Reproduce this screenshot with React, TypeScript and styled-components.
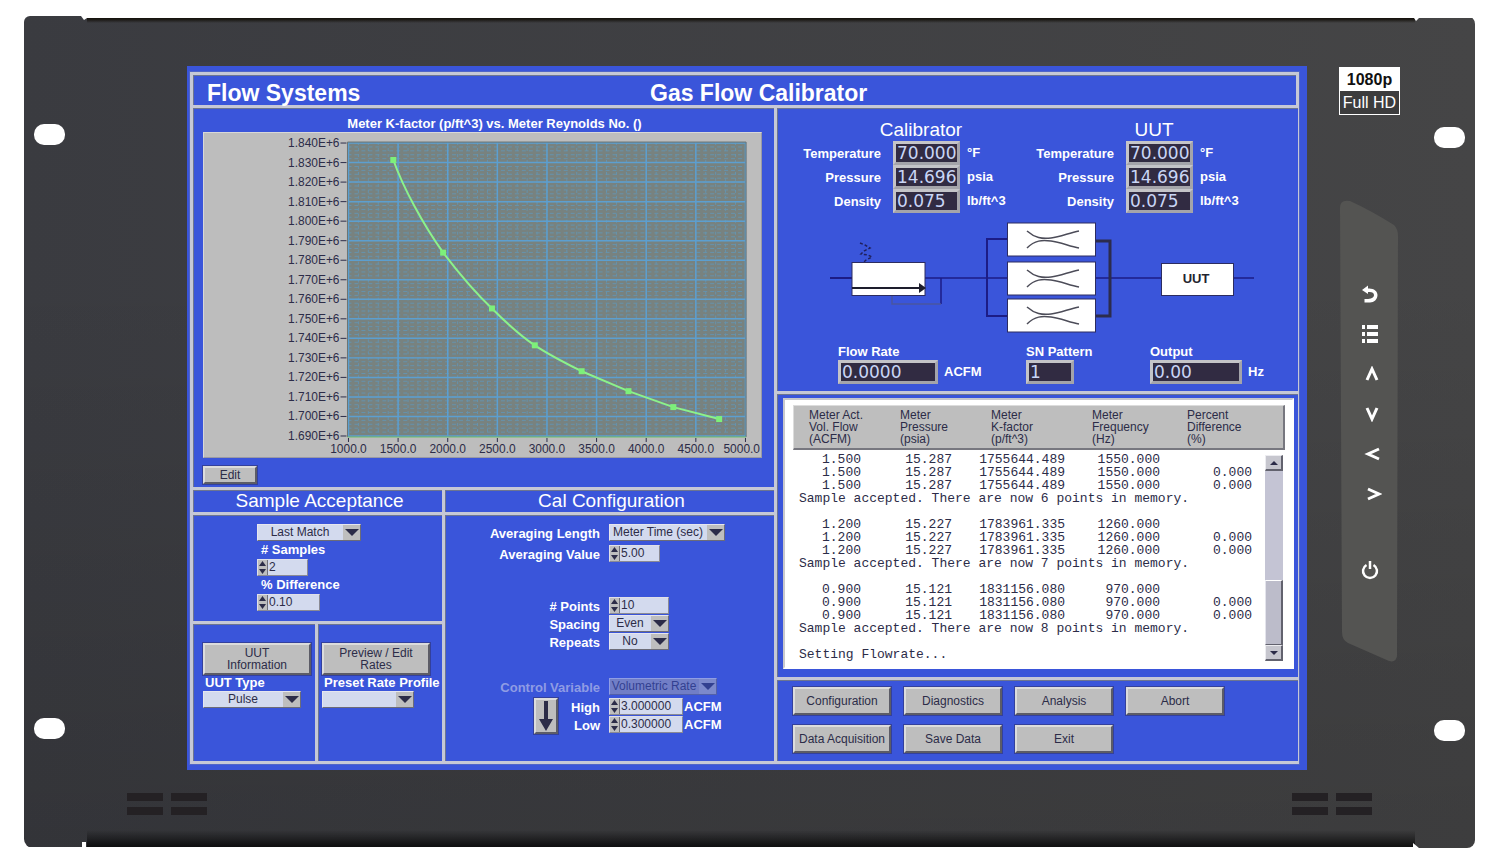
import React from 'react';
import styled, { createGlobalStyle, css } from 'styled-components';

const color = {
  blue: '#3a55da',
  line: '#c6c8d6',
  lineEdge: '#6d7590',
  face: '#bebebe',
  faceLight: '#dcdcdc',
  faceDark: '#5c5c66',
  field: '#d3daee',
  ink: '#2c2c48',
  dark: '#312b42',
};

const sans = '"Liberation Sans", Arial, sans-serif';

const GlobalStyle = createGlobalStyle`
  * { box-sizing: border-box; }
  body { margin: 0; background: #fff; font-family: ${sans}; }
  button, input, select { font: inherit; margin: 0; padding: 0; border-radius: 0; }
`;

/* ---------- Rack enclosure ---------- */

const Page = styled.main`
  padding: 16px 25px 16px 24px;
`;

const Bezel = styled.div`
  border-radius: 6px 8px 8px 9px;
  background:
    linear-gradient(to top, rgba(0, 0, 0, 0.7) 2px, rgba(0, 0, 0, 0) 18px) 63px 100% / calc(100% - 123px) 100% no-repeat,
    linear-gradient(to bottom, #17140f 3px, rgba(0, 0, 0, 0) 7px) 63px 0 / calc(100% - 123px) 100% no-repeat,
    linear-gradient(to bottom, rgba(0, 0, 0, 0) 30%, rgba(0, 0, 0, 0.12)),
    linear-gradient(to right, #3a3b40, #454546);
  clip-path: polygon(
    0 0, 57px 0, 60px 4px, 63px 2px, calc(100% - 61px) 2px, calc(100% - 59px) 5px, calc(100% - 56px) 2px, 100% 2px,
    100% 100%, calc(100% - 56px) 100%, calc(100% - 62px) calc(100% - 5px), calc(100% - 62px) calc(100% - 1px),
    62px calc(100% - 1px), 62px calc(100% - 6px), 58px calc(100% - 6px), 58px calc(100% - 1px), 0 calc(100% - 1px)
  );
`;

const Front = styled.div`
  display: grid;
  grid-template-columns: 163px minmax(0, 1fr) 168px;
`;

const Ear = styled.div`
  display: flex;
  flex-direction: column;
  justify-content: space-between;
  padding: 108px 0 31px 10px;
`;

const RightSide = styled.div`
  display: flex;
  justify-content: space-between;
  padding: 0 10px 0 32px;
`;

const RightEar = styled(Ear)`
  padding: 111px 0 29px;
`;

const MountHole = styled.span`
  width: 31px;
  height: 21px;
  border-radius: 10px;
  background: #fff;
`;

const Footer = styled.div`
  display: flex;
  justify-content: space-between;
  padding: 23px 103px 33px;
`;

const Vent = styled.div`
  display: grid;
  grid-template-columns: 36px 36px;
  grid-auto-rows: 8px;
  gap: 6px 8px;
`;

const Slot = styled.span`
  background: #242124;
`;

const Controls = styled.div`
  display: flex;
  flex-direction: column;
  width: 61px;
  padding-top: 51px;
`;

const Badge = styled.div`
  border: 1px solid #fff;
  background: #3c3c3d;
  color: #fff;
  font-size: 16px;
  line-height: 23px;
  text-align: center;
  white-space: nowrap;
`;

const BadgeTop = styled.div`
  background: #fff;
  color: #111;
  font-weight: bold;
`;

const KeyPad = styled.div`
  position: relative;
  display: flex;
  flex-direction: column;
  gap: 18px;
  width: 59px;
  height: 462px;
  margin: 85px 0 0 1px;
  padding-top: 83px;
`;

const KeyPadShape = styled.svg`
  position: absolute;
  inset: 0;
  width: 100%;
  height: 100%;
`;

const Key = styled.button<{ $apart?: boolean }>`
  position: relative;
  display: flex;
  align-items: center;
  justify-content: center;
  height: 22px;
  border: 0;
  background: none;
  color: #fff;
  ${(p) => p.$apart && css`margin-top: 36px;`}
`;

/* ---------- Screen and its ruled panels ---------- */

const Screen = styled.div`
  margin-top: 50px;
  padding: 6px 8px 6px 3px;
  background: ${color.blue};
`;

const Ruled = styled.div`
  display: grid;
  gap: 3px;
  background: ${color.line};
`;

const Frame = styled(Ruled)`
  padding: 3px;
  box-shadow: 0 0 0 1px #5065c8;
`;

const Body = styled(Ruled)`
  grid-template-columns: minmax(0, 581fr) minmax(0, 519fr);
`;

const LeftSide = styled(Ruled)`
  grid-template-rows: 379px 1fr;
`;

const Setup = styled(Ruled)`
  grid-template-columns: minmax(0, 249fr) minmax(0, 329fr);
  grid-template-rows: 22px 1fr;
`;

const Acceptance = styled(Ruled)`
  grid-template-rows: 106px 137px;
`;

const Split = styled(Ruled)`
  grid-template-columns: minmax(0, 122fr) minmax(0, 124fr);
`;

const RightPanels = styled(Ruled)`
  grid-template-rows: 283px 283px 81px;
`;

const Panel = styled.section`
  background: ${color.blue};
  box-shadow: inset 1px 1px 0 ${color.lineEdge};
`;

const TitleBar = styled.header`
  display: grid;
  grid-template-columns: 443px 1fr;
  align-items: center;
  height: 30px;
  padding: 5px 0 0 14px;
  background: ${color.blue};
  box-shadow: inset 1px 1px 0 ${color.lineEdge};
  color: #fff;
`;

const Title = styled.h1`
  margin: 0;
  font: bold 23px/24px ${sans};
  white-space: nowrap;
`;

const PanelHeading = styled.h2`
  margin: 0;
  padding-left: 4px;
  background: ${color.blue};
  box-shadow: inset 1px 1px 0 ${color.lineEdge};
  color: #fff;
  font: 19px/22px ${sans};
  text-align: center;
`;

const strong = css`
  color: #fff;
  font: bold 13px/18px ${sans};
  white-space: nowrap;
`;

const Label = styled.label`
  ${strong}
`;

const Unit = styled.span`
  ${strong}
`;

/* ---------- Controls ---------- */

const PushButton = styled.button<{ $w: number; $h: number }>`
  width: ${(p) => p.$w}px;
  height: ${(p) => p.$h}px;
  border: 2px solid;
  border-color: ${color.faceLight} ${color.faceDark} ${color.faceDark} ${color.faceLight};
  outline: 1px solid #33409c;
  outline-offset: 0;
  background: ${color.face};
  color: ${color.ink};
  font-size: 12px;
  line-height: 12px;
`;

const SelectBox = styled.span<{ $w: number; $off?: boolean }>`
  position: relative;
  display: block;
  width: ${(p) => p.$w}px;
  height: 17px;
  opacity: ${(p) => (p.$off ? 0.5 : 1)};

  select {
    appearance: none;
    display: block;
    width: 100%;
    height: 17px;
    padding-right: 18px;
    border: 1px solid;
    border-color: #e6e6ee #6c6c78 #6c6c78 #e6e6ee;
    background: ${(p) => (p.$off ? '#a8a8b4' : color.field)};
    color: ${color.ink};
    opacity: 1;
    font-size: 12px;
    line-height: 15px;
    text-align: center;
    text-align-last: center;
  }

  svg {
    position: absolute;
    top: 1px;
    right: 1px;
    background: ${color.face};
    pointer-events: none;
  }
`;

const SpinBox = styled.span<{ $w: number }>`
  display: grid;
  grid-template-columns: 9px 1fr;
  width: ${(p) => p.$w}px;
  height: 17px;
  border: 1px solid;
  border-color: #e0e0e8 #8a8a94 #8a8a94 #e0e0e8;
  background: ${color.field};

  input {
    width: 100%;
    min-width: 0;
    border: 0;
    border-left: 1px solid #70707c;
    padding-left: 1px;
    background: transparent;
    color: ${color.ink};
    font-size: 12px;
    line-height: 15px;
  }
`;

const SpinKeys = styled.span`
  display: grid;
  grid-template-rows: 1fr 1fr;
  background: ${color.face};

  button {
    display: flex;
    align-items: center;
    justify-content: center;
    border: 0;
    background: none;
  }
`;

type SelectProps = { id: string; width: number; options: string[]; off?: boolean; name?: string };

function Select({ id, width, options, off, name }: SelectProps) {
  return (
    <SelectBox $w={width} $off={off}>
      <select id={id} disabled={off} aria-label={name}>
        {options.map((o) => (
          <option key={o}>{o}</option>
        ))}
      </select>
      <svg width="17" height="15" viewBox="0 0 17 15" aria-hidden="true">
        <path d="M2 4h14l-7 7z" fill={color.ink} />
      </svg>
    </SelectBox>
  );
}

function Spin({ id, width, value }: { id: string; width: number; value: string }) {
  return (
    <SpinBox $w={width}>
      <SpinKeys>
        <button type="button" aria-label="Increase">
          <svg width="7" height="5" viewBox="0 0 7 5"><path d="M0 5l3.500-5L7 5z" fill={color.ink} /></svg>
        </button>
        <button type="button" aria-label="Decrease">
          <svg width="7" height="5" viewBox="0 0 7 5"><path d="M0 0l3.500 5L7 0z" fill={color.ink} /></svg>
        </button>
      </SpinKeys>
      <input id={id} defaultValue={value} />
    </SpinBox>
  );
}

/* ---------- Chart ---------- */

const ChartPanel = styled(Panel)`
  padding: 7px 12px 0 10px;
`;

const ChartTitle = styled.h2`
  margin: 0;
  padding-left: 24px;
  color: #fff;
  font: bold 13px/17px ${sans};
  text-align: center;
`;

const ChartSvg = styled.svg`
  display: block;
  width: 100%;
  height: 326px;
  margin-bottom: 7px;
  background: #bdbdbd;
  border: 1px solid;
  border-color: #d8d8d8 #9a9aa4 #9a9aa4 #d8d8d8;
`;

const POINTS = [
  [190, 27], [240, 120], [289, 176], [332, 213], [379, 239], [426, 259], [471, 275], [517, 287],
];

const PLOT = { x: 144, y: 9, w: 400, h: 296 };
const Y_STEP = 19.6;
const X_STEP = 49.8;

function KFactorChart() {
  const yTicks = Array.from({ length: 16 }, (_, i) => `1.${840 - i * 10}E+6`);
  const xTicks = Array.from({ length: 9 }, (_, i) => `${1000 + i * 500}.0`);
  const minorY = Array.from({ length: 75 }, (_, i) => PLOT.y + 1 + (i * Y_STEP) / 5);
  const minorX = Array.from({ length: 40 }, (_, i) => PLOT.x + 1 + (i * X_STEP) / 5);
  return (
    <ChartSvg viewBox="0 0 559 325" role="img" aria-label="Meter K-factor against Reynolds number">
      <rect x={PLOT.x} y={PLOT.y} width={PLOT.w} height={PLOT.h} fill="#78827f" />
      <g stroke="#6099bd" strokeWidth="1" opacity="0.75">
        {minorY.map((y) => (
          <line key={y} x1={PLOT.x} x2={PLOT.x + PLOT.w} y1={y} y2={y} strokeDasharray="4 3" />
        ))}
        {minorX.map((x) => (
          <line key={x} x1={x} x2={x} y1={PLOT.y} y2={PLOT.y + PLOT.h} strokeDasharray="3 3" />
        ))}
      </g>
      <g stroke="#5c9fd0" strokeWidth="1.500">
        {yTicks.map((t, i) => (
          <line key={t} x1={PLOT.x} x2={PLOT.x + PLOT.w} y1={10 + i * Y_STEP} y2={10 + i * Y_STEP} />
        ))}
        {xTicks.map((t, i) => (
          <line key={t} x1={145 + i * X_STEP} x2={145 + i * X_STEP} y1={PLOT.y} y2={PLOT.y + PLOT.h} />
        ))}
      </g>
      <path d={`M${PLOT.x} ${PLOT.y + PLOT.h}V${PLOT.y}H${PLOT.x + PLOT.w}V${PLOT.y + PLOT.h}`} fill="none" stroke="#6c7472" />
      <path d={`M${PLOT.x} ${PLOT.y + PLOT.h}H${PLOT.x + PLOT.w}`} stroke="#6fbf6a" />
      <g stroke={color.ink}>
        {yTicks.map((t, i) => (
          <line key={t} x1="137" x2="143" y1={10 + i * Y_STEP} y2={10 + i * Y_STEP} />
        ))}
        {xTicks.map((t, i) => (
          <line key={t} x1={145 + i * X_STEP} x2={145 + i * X_STEP} y1="306" y2="310" />
        ))}
      </g>
      <g fill={color.ink} fontSize="12" fontFamily="Liberation Sans, Arial, sans-serif">
        {yTicks.map((t, i) => (
          <text key={t} x="136" y={14 + i * Y_STEP} textAnchor="end">{t}</text>
        ))}
        {xTicks.map((t, i) => {
          const last = i === xTicks.length - 1;
          return (
            <text key={t} x={last ? 558 : 145 + i * X_STEP} y="321" textAnchor={last ? 'end' : 'middle'}>{t}</text>
          );
        })}
      </g>
      <path
        d="M190 27C200 55 220 92 240 120C256 141 272 160 289 176C303 190 317 203 332 213C347 223 363 231 379 239L426 259L471 275L517 287"
        fill="none"
        stroke="#8cf28a"
        strokeWidth="2"
      />
      {POINTS.map(([x, y]) => (
        <rect key={x} x={x - 3} y={y - 3} width="6" height="6" fill="#7df07a" />
      ))}
    </ChartSvg>
  );
}

/* ---------- Sample acceptance and UUT ---------- */

const Stack = styled(Panel)<{ $top: number; $left: number }>`
  display: flex;
  flex-direction: column;
  align-items: flex-start;
  padding: ${(p) => p.$top}px 0 0 ${(p) => p.$left}px;

  > label {
    padding-left: 4px;
  }
`;

const TightStack = styled(Stack)`
  > label {
    padding-left: 2px;
    line-height: 16px;
  }
`;

/* ---------- Calibration configuration ---------- */

const ConfigPanel = styled(Panel)`
  padding-top: 9px;
`;

const Row = styled.div<{ $before?: number }>`
  display: grid;
  grid-template-columns: 155px auto 1fr;
  column-gap: 9px;
  height: 18px;
  margin-top: ${(p) => p.$before ?? 0}px;

  > label {
    line-height: 20px;
    text-align: right;
  }
`;

const DimLabel = styled(Label)`
  color: #8f9ce4;
`;

const RangeRow = styled.div`
  display: grid;
  grid-template-columns: 24px 1fr;
  padding-left: 89px;
  margin-top: 2px;
`;

const RangeFields = styled.div`
  display: grid;
  grid-template-columns: 42px 83px 1fr;
  grid-auto-rows: 18px;

  > label {
    line-height: 20px;
    text-align: right;
  }
  > span:nth-child(3n + 2) {
    margin-left: 9px;
  }
  > span:nth-child(3n) {
    padding-left: 1px;
  }
`;

const ArrowButton = styled(PushButton)`
  display: flex;
  align-items: center;
  justify-content: center;
`;

/* ---------- Flow overview ---------- */

const FlowPanel = styled(Panel)`
  padding-top: 10px;
`;

const Readings = styled.div`
  display: grid;
  grid-template-columns: 233px 1fr;
`;

const Reading = styled.div`
  display: grid;
  grid-template-columns: 104px 67px 1fr;
  grid-template-rows: 23px;
  grid-auto-rows: 24px;
  align-items: center;

  h3 {
    grid-column: 1 / -1;
    width: 288px;
    margin: 0;
    color: #fff;
    font: 19px/20px ${sans};
    text-align: center;
  }
  > label {
    padding-top: 2px;
    text-align: right;
  }
  > input {
    margin-left: 12px;
  }
  > span {
    padding-left: 19px;
  }
`;

const Readout = styled.input<{ $w: number; $h: number }>`
  width: ${(p) => p.$w}px;
  height: ${(p) => p.$h}px;
  border: 3px solid;
  border-color: #c4c4c8 #a4a4aa #a4a4aa #c4c4c8;
  padding-left: 1px;
  background: ${color.dark};
  color: #c9d6f6;
  font: 17px/18px "DejaVu Sans", sans-serif;
`;

const Diagram = styled.svg`
  display: block;
  margin: 3px 0 0 52px;
`;

const Outputs = styled.div`
  display: grid;
  grid-template-columns: 188px 124px 1fr;
  padding: 5px 0 0 61px;
`;

const Output = styled.div`
  > div {
    display: flex;
    align-items: center;
    gap: 6px;
  }
  > label {
    display: block;
    line-height: 17px;
  }
`;

function Group({ title, id }: { title: string; id: string }) {
  const rows = [
    ['Temperature', '70.000', '°F'],
    ['Pressure', '14.696', 'psia'],
    ['Density', '0.075', 'lb/ft^3'],
  ];
  return (
    <Reading>
      <h3>{title}</h3>
      {rows.map(([name, value, unit]) => (
        <React.Fragment key={name}>
          <Label htmlFor={id + name}>{name}</Label>
          <Readout id={id + name} $w={67} $h={24} readOnly value={value} />
          <Unit>{unit}</Unit>
        </React.Fragment>
      ))}
    </Reading>
  );
}

function FlowDiagram() {
  const nozzles = [7, 46, 83];
  return (
    <Diagram width="430" height="122" viewBox="0 0 430 122" role="img" aria-label="Flow path">
      <g fill="none" stroke="#1c1c86" strokeWidth="2">
        <path d="M1 62H24" />
        <path d="M179 23H158V100H179" />
        <path d="M96 62H179M112 62V88M266 62H332M404 62H425" strokeWidth="1.500" />
      </g>
      <path d="M266 25H281V100H266" fill="none" stroke="#2c2c4c" strokeWidth="3" />
      <path d="M63 80V88H112" fill="none" stroke="#4a55a0" strokeWidth="1.500" />
      <path d="M31 27l5 2 5 3-6 3-3 3 7 1 4 2-6 3-2 2" fill="none" stroke="#20205c" strokeWidth="1.500" strokeDasharray="3 2" />
      <g fill="#fff" stroke="#2c2c60" strokeWidth="1">
        <rect x="23" y="46.500" width="73" height="33" />
        <rect x="332.500" y="47.500" width="72" height="32" />
        {nozzles.map((y) => (
          <rect key={y} x="178.500" y={y} width="88" height="33" />
        ))}
      </g>
      <path d="M23 72H91" stroke="#1d1d2c" strokeWidth="2" />
      <path d="M90 67l7 5-7 5z" fill="#1d1d2c" />
      {nozzles.map((y) => (
        <path
          key={y}
          d={`M198 ${y + 8}C206 ${y + 15} 213 ${y + 16} 222 ${y + 15}S240 ${y + 10} 250 ${y + 8}M198 ${y + 25}C206 ${y + 17} 213 ${y + 17} 222 ${y + 18}S240 ${y + 23} 250 ${y + 25}`}
          fill="none"
          stroke="#4c4c58"
          strokeWidth="1.500"
        />
      ))}
      <text x="367" y="67" textAnchor="middle" fill="#24242e" fontFamily="Liberation Sans, Arial, sans-serif" fontWeight="700" fontSize="13">
        UUT
      </text>
    </Diagram>
  );
}

/* ---------- Measurement log ---------- */

const LogPanel = styled(Panel)`
  padding: 4px 4px 8px 6px;
`;

const Log = styled.div`
  position: relative;
  height: 271px;
  border: 2px solid;
  border-color: #c8c8cc #fff #fff #c8c8cc;
  padding: 5px 7px 0 8px;
  background: #fff;
`;

const LogTable = styled.table`
  width: 100%;
  table-layout: fixed;
  border-collapse: separate;
  border-spacing: 0;
  color: ${color.ink};

  th {
    height: 45px;
    padding: 0 0 1px 15px;
    background: ${color.face};
    border-top: 1px solid #dcdcdc;
    border-bottom: 2px solid #77777f;
    font-size: 12px;
    font-weight: normal;
    line-height: 12px;
    text-align: left;
    white-space: pre;
  }
  th:first-child { border-left: 1px solid #dcdcdc; }
  th:last-child { border-right: 2px solid #77777f; }

  tbody tr:first-child td { padding-top: 3px; }

  td {
    padding: 0;
    font: 13px/13px "Liberation Mono", monospace;
    text-align: right;
    white-space: pre;
  }
  td:nth-child(1), td:nth-child(2) { padding-right: 24px; }
  td:nth-child(3), td:nth-child(4) { padding-right: 12px; }
  td:nth-child(5) { padding-right: 33px; }
  td[colspan] { padding-left: 6px; text-align: left; }
`;

const ScrollTrack = styled.div`
  position: absolute;
  top: 55px;
  right: 9px;
  display: flex;
  flex-direction: column;
  width: 18px;
  height: 206px;
  background: #c4c4d4;
`;

const ScrollArrow = styled.button`
  display: flex;
  align-items: center;
  justify-content: center;
  height: 16px;
  border: 1px solid;
  border-color: #ececf0 #62626e #62626e #ececf0;
  border-right-width: 2px;
  border-bottom-width: 2px;
  background: #c6c6ce;
`;

const ScrollThumb = styled.div`
  height: 65px;
  margin-top: auto;
  border: 1px solid;
  border-color: #fff #62626e #62626e #e4e4ec;
  border-right-width: 2px;
  background: #bcbcca;
`;

const HEADINGS = ['Meter Act.\nVol. Flow\n(ACFM)', 'Meter\nPressure\n(psia)', 'Meter\nK-factor\n(p/ft^3)', 'Meter\nFrequency\n(Hz)', 'Percent\nDifference\n(%)'];

const SAMPLES = [
  { cells: ['1.500', '15.287', '1755644.489', '1550.000'], count: 6 },
  { cells: ['1.200', '15.227', '1783961.335', '1260.000'], count: 7 },
  { cells: ['0.900', '15.121', '1831156.080', '970.000'], count: 8 },
];

function MeasurementLog() {
  return (
    <Log>
      <LogTable>
        <colgroup>
          <col width="92" />
          <col width="91" />
          <col width="101" />
          <col width="95" />
          <col />
        </colgroup>
        <thead>
          <tr>
            {HEADINGS.map((h) => (
              <th key={h} scope="col">{h}</th>
            ))}
          </tr>
        </thead>
        <tbody>
          {SAMPLES.map((s) => (
            <React.Fragment key={s.count}>
              {['', '0.000', '0.000'].map((diff, i) => (
                <tr key={i}>
                  {s.cells.map((c) => (
                    <td key={c}>{c}</td>
                  ))}
                  <td>{diff}</td>
                </tr>
              ))}
              <tr>
                <td colSpan={5}>{`Sample accepted. There are now ${s.count} points in memory.`}</td>
              </tr>
              <tr>
                <td colSpan={5}>{' '}</td>
              </tr>
            </React.Fragment>
          ))}
          <tr>
            <td colSpan={5}>Setting Flowrate...</td>
          </tr>
        </tbody>
      </LogTable>
      <ScrollTrack>
        <ScrollArrow type="button" aria-label="Scroll up">
          <svg width="8" height="4" viewBox="0 0 8 4"><path d="M0 4l4-4 4 4z" fill={color.ink} /></svg>
        </ScrollArrow>
        <ScrollThumb />
        <ScrollArrow type="button" aria-label="Scroll down">
          <svg width="8" height="4" viewBox="0 0 8 4"><path d="M0 0l4 4 4-4z" fill={color.ink} /></svg>
        </ScrollArrow>
      </ScrollTrack>
    </Log>
  );
}

const Actions = styled(Panel)`
  display: grid;
  grid-template-columns: repeat(4, 98px);
  align-content: start;
  gap: 10px 13px;
  padding: 7px 0 0 16px;
`;

const ACTIONS = ['Configuration', 'Diagnostics', 'Analysis', 'Abort', 'Data Acquisition', 'Save Data', 'Exit'];

/* ---------- Hardware keys ---------- */

const chevrons = [
  ['Up', 'M-5 6L0-5L5 6'],
  ['Down', 'M-5-6L0 5L5-6'],
  ['Left', 'M7-5L-4 0L7 5'],
  ['Right', 'M-4-5L7 0L-4 5'],
];

function HardwareKeys() {
  return (
    <KeyPad>
      <KeyPadShape viewBox="0 0 59 462" preserveAspectRatio="none" aria-hidden="true">
        <path d="M0 8Q0-1 10 1Q30 10 54 25Q58 29 58 36L57 456Q56 463 49 461L8 443Q2 440 2 432Z" fill="#545452" />
      </KeyPadShape>
      <Key type="button" aria-label="Back">
        <svg width="16" height="18" viewBox="0 0 16 18">
          <path d="M0 5L6 0.500V3.500C11.500 3 15.500 6 15.500 10C15.500 14.500 12 17.500 8 17.500H2.500V14C8 14.500 12 13 12 10C12 7.500 9.500 6.500 6 7V9Z" fill="#fff" />
        </svg>
      </Key>
      <Key type="button" aria-label="Menu">
        <svg width="16" height="18" viewBox="0 0 16 18">
          <path d="M0 0h3v4H0zM5 0h11v4H5zM0 7h3v4H0zM5 7h11v4H5zM0 14h3v4H0zM5 14h11v4H5z" fill="#fff" />
        </svg>
      </Key>
      {chevrons.map(([name, d]) => (
        <Key key={name} type="button" aria-label={name}>
          <svg width="24" height="16" viewBox="-14 -8 24 16">
            <path d={d} fill="none" stroke="#fff" strokeWidth="3" />
          </svg>
        </Key>
      ))}
      <Key type="button" aria-label="Power" $apart>
        <svg width="18" height="20" viewBox="0 0 18 20">
          <path d="M5.500 5A7 7 0 1 0 12.500 5M9 1V9" fill="none" stroke="#fff" strokeWidth="2.500" />
        </svg>
      </Key>
    </KeyPad>
  );
}

function Vents() {
  return (
    <Vent>
      <Slot />
      <Slot />
      <Slot />
      <Slot />
    </Vent>
  );
}

export default function App() {
  return (
    <Page>
      <GlobalStyle />
      <Bezel>
        <Front>
          <Ear>
            <MountHole />
            <MountHole />
          </Ear>
          <Screen>
            <Frame>
              <TitleBar>
                <Title>Flow Systems</Title>
                <Title as="div">Gas Flow Calibrator</Title>
              </TitleBar>
              <Body>
                <LeftSide>
                  <ChartPanel>
                    <ChartTitle>Meter K-factor (p/ft^3) vs. Meter Reynolds No. ()</ChartTitle>
                    <KFactorChart />
                    <PushButton type="button" $w={54} $h={18}>Edit</PushButton>
                  </ChartPanel>
                  <Setup>
                    <PanelHeading>Sample Acceptance</PanelHeading>
                    <PanelHeading>Cal Configuration</PanelHeading>
                    <Acceptance>
                      <Stack $top={9} $left={64}>
                        <Select id="match" name="Match rule" width={104} options={['Last Match']} />
                        <Label htmlFor="samples"># Samples</Label>
                        <Spin id="samples" width={51} value="2" />
                        <Label htmlFor="difference">% Difference</Label>
                        <Spin id="difference" width={63} value="0.10" />
                      </Stack>
                      <Split>
                        <TightStack $top={19} $left={10}>
                          <PushButton type="button" $w={108} $h={32}>UUT<br />Information</PushButton>
                          <Label htmlFor="uut-type">UUT Type</Label>
                          <Select id="uut-type" width={98} options={['Pulse']} />
                        </TightStack>
                        <TightStack $top={19} $left={4}>
                          <PushButton type="button" $w={108} $h={32}>Preview / Edit<br />Rates</PushButton>
                          <Label htmlFor="profile">Preset Rate Profile</Label>
                          <Select id="profile" width={92} options={['']} />
                        </TightStack>
                      </Split>
                    </Acceptance>
                    <ConfigPanel>
                      <Row>
                        <Label htmlFor="avg-length">Averaging Length</Label>
                        <Select id="avg-length" width={116} options={['Meter Time (sec)']} />
                      </Row>
                      <Row $before={3}>
                        <Label htmlFor="avg-value">Averaging Value</Label>
                        <Spin id="avg-value" width={51} value="5.00" />
                      </Row>
                      <Row $before={34}>
                        <Label htmlFor="points"># Points</Label>
                        <Spin id="points" width={60} value="10" />
                      </Row>
                      <Row>
                        <Label htmlFor="spacing">Spacing</Label>
                        <Select id="spacing" width={60} options={['Even']} />
                      </Row>
                      <Row>
                        <Label htmlFor="repeats">Repeats</Label>
                        <Select id="repeats" width={60} options={['No']} />
                      </Row>
                      <Row $before={27}>
                        <DimLabel htmlFor="variable">Control Variable</DimLabel>
                        <Select id="variable" width={108} options={['Volumetric Rate']} off />
                      </Row>
                      <RangeRow>
                        <ArrowButton type="button" aria-label="High to low" $w={24} $h={36}>
                          <svg width="16" height="30" viewBox="0 0 16 30">
                            <path d="M6 0h4v18h5l-7 12-7-12h5z" fill={color.ink} />
                          </svg>
                        </ArrowButton>
                        <RangeFields>
                          <Label htmlFor="high">High</Label>
                          <Spin id="high" width={74} value="3.000000" />
                          <Unit>ACFM</Unit>
                          <Label htmlFor="low">Low</Label>
                          <Spin id="low" width={74} value="0.300000" />
                          <Unit>ACFM</Unit>
                        </RangeFields>
                      </RangeRow>
                    </ConfigPanel>
                  </Setup>
                </LeftSide>
                <RightPanels>
                  <FlowPanel>
                    <Readings>
                      <Group title="Calibrator" id="cal" />
                      <Group title="UUT" id="uut" />
                    </Readings>
                    <FlowDiagram />
                    <Outputs>
                      <Output>
                        <Label htmlFor="flow-rate">Flow Rate</Label>
                        <div>
                          <Readout id="flow-rate" $w={100} $h={24} readOnly value="0.0000" />
                          <Unit>ACFM</Unit>
                        </div>
                      </Output>
                      <Output>
                        <Label htmlFor="pattern">SN Pattern</Label>
                        <div>
                          <Readout id="pattern" $w={48} $h={24} readOnly value="1" />
                        </div>
                      </Output>
                      <Output>
                        <Label htmlFor="output">Output</Label>
                        <div>
                          <Readout id="output" $w={92} $h={24} readOnly value="0.00" />
                          <Unit>Hz</Unit>
                        </div>
                      </Output>
                    </Outputs>
                  </FlowPanel>
                  <LogPanel>
                    <MeasurementLog />
                  </LogPanel>
                  <Actions>
                    {ACTIONS.map((a) => (
                      <PushButton key={a} type="button" $w={98} $h={28}>{a}</PushButton>
                    ))}
                  </Actions>
                </RightPanels>
              </Body>
            </Frame>
          </Screen>
          <RightSide>
            <Controls>
              <Badge>
                <BadgeTop>1080p</BadgeTop>
                Full HD
              </Badge>
              <HardwareKeys />
            </Controls>
            <RightEar>
              <MountHole />
              <MountHole />
            </RightEar>
          </RightSide>
        </Front>
        <Footer>
          <Vents />
          <Vents />
        </Footer>
      </Bezel>
    </Page>
  );
}
